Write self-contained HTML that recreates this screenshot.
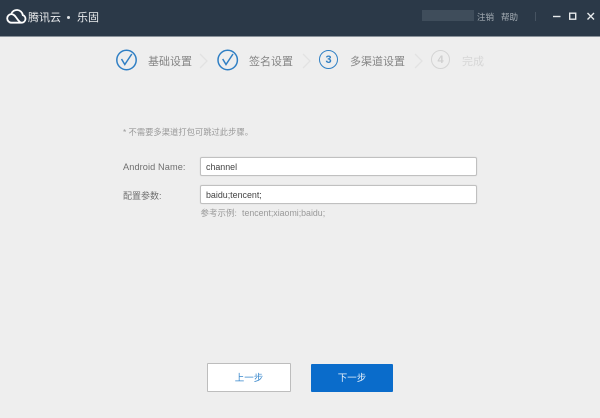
<!DOCTYPE html>
<html lang="zh">
<head>
<meta charset="utf-8">
<style>
html,body{margin:0;padding:0}
body{width:600px;height:418px;overflow:hidden;background:#eeeeee;position:relative;font-family:"Liberation Sans","Noto Sans CJK SC",sans-serif}
#wrap{position:absolute;left:0;top:0;width:600px;height:418px;filter:blur(.3px)}
.a{position:absolute;white-space:nowrap}
#top{left:0;top:0;width:600px;height:36px;background:#2b3948;border-bottom:1px solid #8a929a}
.step{font-size:11px;line-height:14px;color:#858585;top:55px}
.lab{font-size:9.200px;line-height:12px;color:#6f6f6f}
.inp{left:200px;width:275px;height:17px;background:#fff;border:1px solid #c0c0c0;border-radius:2px;font-size:8.900px;line-height:19px;color:#444;text-indent:5px;box-shadow:0 0 1px #cfcfcf}
.btn{text-align:center;font-size:9.500px;box-sizing:border-box;border-radius:1px}
svg{position:absolute;overflow:visible}
</style>
</head>
<body>
<div id="wrap">
<div class="a" id="top"></div>
<svg style="left:6px;top:9px" width="20" height="15" viewBox="0 0 20 15" fill="none" stroke="#fff" stroke-width="1.800"><path d="M5.500 13.700H15.500a3.900 3.900 0 0 0 1.300-7.600A6 6 0 0 0 5.200 5"/><path d="M5.500 13.700a4.300 4.300 0 0 1 0-8.600c2.800 0 4.300 3 6 5.200 1 1.300 2 2.600 3.500 3.400"/></svg>
<div class="a" style="left:28px;top:10px;font-size:11px;line-height:16px;color:#e9ebed">腾讯云</div>
<div class="a" style="left:67px;top:16px;width:3px;height:3px;border-radius:50%;background:#dfe2e5"></div>
<div class="a" style="left:77px;top:10px;font-size:11px;line-height:16px;color:#e9ebed">乐固</div>
<div class="a" style="left:422px;top:10px;width:52px;height:11px;background:#3f4d5b"></div>
<div class="a" style="left:477px;top:11px;font-size:8.500px;line-height:12px;color:#a4acb3">注销</div>
<div class="a" style="left:501px;top:11px;font-size:8.500px;line-height:12px;color:#a4acb3">帮助</div>
<div class="a" style="left:535px;top:12px;width:1px;height:9px;background:#465361"></div>
<svg style="left:552px;top:10px" width="44" height="12" fill="none" stroke="#e6e9eb" stroke-width="1.400"><path d="M1 6.500h7.500"/><rect x="17.700" y="3.200" width="6" height="6"/><path d="M35.500 3l6.500 6.500M42 3l-6.500 6.500"/></svg>

<svg style="left:115px;top:49px" width="22" height="22" fill="none" stroke="#2f7fc4" stroke-width="1.500"><circle cx="11.500" cy="11" r="9.700"/><path d="M6.500 10l3.300 5.500L16.800 5"/></svg>
<div class="a step" style="left:148px">基础设置</div>
<svg style="left:199px;top:53px" width="10" height="16" fill="none" stroke="#e2e2e2" stroke-width="1.300"><path d="M1 1l7 7-7 7"/></svg>
<svg style="left:217px;top:49px" width="22" height="22" fill="none" stroke="#2f7fc4" stroke-width="1.500"><circle cx="10.700" cy="11" r="9.700"/><path d="M5.700 10l3.300 5.500L16 5"/></svg>
<div class="a step" style="left:249px">签名设置</div>
<svg style="left:302px;top:53px" width="10" height="16" fill="none" stroke="#e2e2e2" stroke-width="1.300"><path d="M1 1l7 7-7 7"/></svg>
<div class="a" style="left:319px;top:50px;width:17px;height:17px;border:1.500px solid #2f7fc4;border-radius:50%;text-align:center;font-size:11px;font-weight:bold;line-height:18px;color:#2f7fc4">3</div>
<div class="a step" style="left:350px">多渠道设置</div>
<svg style="left:414px;top:53px" width="10" height="16" fill="none" stroke="#e2e2e2" stroke-width="1.300"><path d="M1 1l7 7-7 7"/></svg>
<div class="a" style="left:431px;top:50px;width:17px;height:17px;border:1.500px solid #d4d4d4;border-radius:50%;text-align:center;font-size:11px;font-weight:bold;line-height:18px;color:#cfcfcf">4</div>
<div class="a step" style="left:462px;color:#d6d6d6">完成</div>

<div class="a" style="left:123px;top:126px;font-size:8.300px;line-height:12px;color:#999">* 不需要多渠道打包可跳过此步骤。</div>
<div class="a lab" style="left:123px;top:161px;letter-spacing:.1px">Android Name:</div>
<div class="a inp" style="top:157px">channel</div>
<div class="a lab" style="left:123px;top:190px;font-size:9px">配置参数:</div>
<div class="a inp" style="top:185px">baidu;tencent;</div>
<div class="a" style="left:200.500px;top:207px;font-size:8.500px;line-height:12px;color:#999">参考示例:</div>
<div class="a" style="left:242px;top:207px;font-size:8.800px;line-height:12px;color:#999">tencent;xiaomi;baidu;</div>

<div class="a btn" style="left:207px;top:363px;width:84px;height:29px;background:#fff;border:1px solid #bdbdbd;color:#3a88cc;line-height:30px">上一步</div>
<div class="a btn" style="left:311px;top:364px;width:82px;height:28px;background:#0a6ccb;color:#e8f1fa;line-height:30px">下一步</div>
</div>
</body>
</html>
